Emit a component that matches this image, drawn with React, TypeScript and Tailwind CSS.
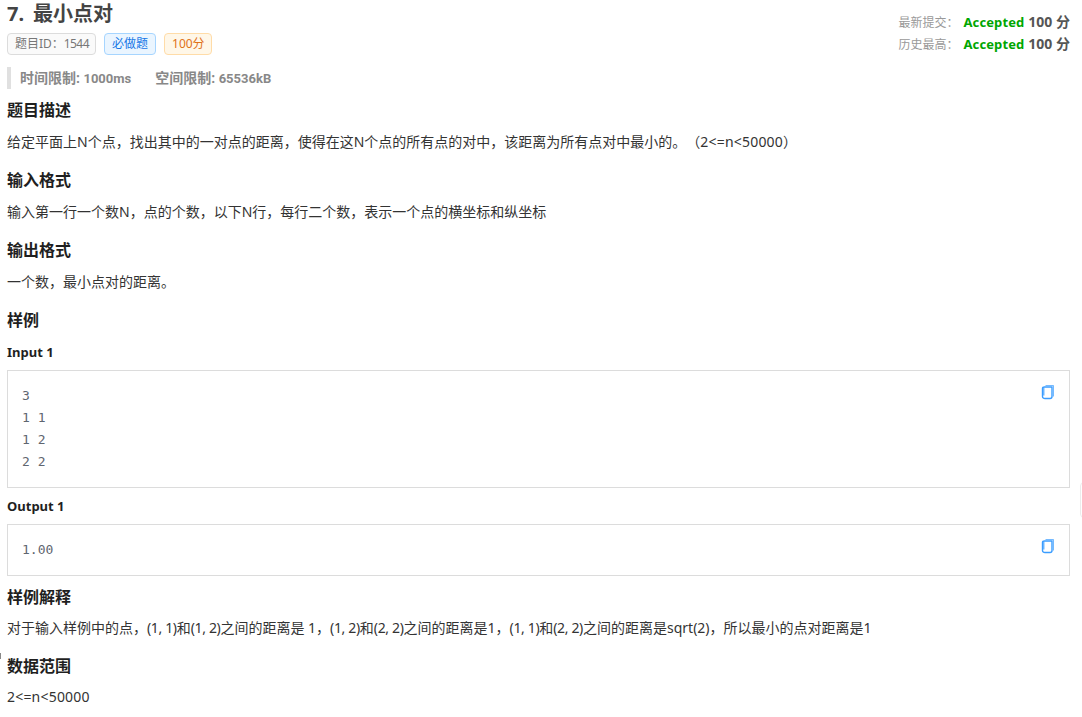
const font = { fontFamily: '"Noto Sans", "Noto Sans CJK SC", sans-serif' };
const roboto = { fontFamily: 'Roboto, "Noto Sans CJK SC", sans-serif' };

function CopyIcon() {
  return (
    <svg width="14" height="16" viewBox="0 0 14 16" fill="none" className="text-[#3b9dff]">
      <path d="M4.5 1.5H12.5V12.5" stroke="currentColor" strokeWidth="1" opacity="0.7" />
      <path d="M3.5 3H11V12.5C11 13.6 10.4 14.5 9 14.5H4C2.6 14.5 1.5 13.8 1.5 12.5V4.5C1.5 3.6 2.2 3 3.5 3Z" stroke="currentColor" strokeWidth="1.4" />
      <path d="M1.5 4.5V11.5H3.5V3.5Z" fill="currentColor" opacity="0.7" />
    </svg>
  );
}

function Heading({ children }: { children: React.ReactNode }) {
  return <h2 className="text-[16px] leading-[22px] font-bold text-[#1f1f1f]">{children}</h2>;
}

function Body({ children, gap = "mt-[11px]" }: { children: React.ReactNode; gap?: string }) {
  return (
    <p className={`text-[14px] leading-[20px] text-[#333] whitespace-nowrap [text-spacing-trim:space-all] ${gap}`}>
      {children}
    </p>
  );
}

function Pair({ children }: { children: React.ReactNode }) {
  return <span className="tracking-[-0.35px]">{children}</span>;
}

function Range() {
  return <span className="tracking-[0.2px]">2&lt;=n&lt;50000</span>;
}

function Sample({ label, lines, height }: { label: string; lines: string[]; height: string }) {
  return (
    <div>
      <div className="text-[13px] leading-[20px] font-bold text-[#1f1f1f]">{label}</div>
      <div className={`mt-[8px] relative border border-[#dcdcdc] pl-[14px] flex flex-col justify-center ${height}`}>
        <pre className="text-[13px] leading-[22px] text-[#5f6670]" style={{ fontFamily: '"DejaVu Sans Mono", monospace' }}>
          {lines.join("\n")}
        </pre>
        <div className="absolute right-[14px] top-[13px]"><CopyIcon /></div>
      </div>
    </div>
  );
}

function Status({ label }: { label: string }) {
  return (
    <div className="flex items-baseline h-[22px] leading-[22px]">
      <span className="text-[#999] text-[12px] w-[65px]">{label}</span>
      <span className="font-bold text-[13px] tracking-[0.1px] text-[#00a600]">Accepted</span>
      <span className="font-bold text-[14px] text-[#555] ml-[4px]">100 分</span>
    </div>
  );
}

function Tag({ className, children }: { className: string; children: React.ReactNode }) {
  return <span className={`h-[22px] flex items-center text-[12px] border rounded-[4px] ${className}`}>{children}</span>;
}

export default function App() {
  return (
    <div className="w-[1082px] h-[717px] overflow-hidden bg-white pl-[7px] pr-[12px] relative" style={font}>
      <div className="absolute left-[1080px] top-[482px] w-[12px] h-[36px] border border-[#ececec] rounded-l-[4px]" />
      <div className="absolute left-0 top-[653px] w-[1px] h-[6px] bg-[#888]" />
      <div className="flex justify-between">
        <div>
          <h1 className="text-[20px] leading-[28px] font-bold text-[#444] flex">
            <span className="w-[26px]">7.</span>
            <span>最小点对</span>
          </h1>
          <div className="flex gap-[8px] mt-[5px]">
            <Tag className="px-[7px] w-[89px] whitespace-nowrap border-[#dcdcdc] bg-[#fafafa] text-[#777]">
              题目ID：<span className="tracking-[-0.6px]">1544</span>
            </Tag>
            <Tag className="px-[7px] border-[#a6d5ff] bg-[#eaf5ff] text-[#1677e6]">必做题</Tag>
            <Tag className="px-[7px] w-[48px] whitespace-nowrap border-[#ffdca8] bg-[#fff7e8] text-[#e0721a]">100分</Tag>
          </div>
        </div>
        <div className="pt-[11px]">
          <Status label="最新提交：" />
          <Status label="历史最高：" />
        </div>
      </div>
      <div className="mt-[12px] h-[22px] border-l-[4px] border-[#e0e0e0] pl-[9px] flex items-center gap-[24px] text-[14px] font-bold text-[#888]" style={roboto}>
        <span>时间限制: <span className="text-[13px]">1000ms</span></span>
        <span>空间限制: <span className="text-[13px]">65536kB</span></span>
      </div>
      <div className="mt-[10px] flex flex-col">
        <Heading>题目描述</Heading>
        <Body>给定平面上N个点，找出其中的一对点的距离，使得在这N个点的所有点的对中，该距离为所有点对中最小的。（<Range />）</Body>
        <div className="mt-[17px]"><Heading>输入格式</Heading></div>
        <Body>输入第一行一个数N，点的个数，以下N行，每行二个数，表示一个点的横坐标和纵坐标</Body>
        <div className="mt-[17px]"><Heading>输出格式</Heading></div>
        <Body>一个数，最小点对的距离。</Body>
        <div className="mt-[17px]"><Heading>样例</Heading></div>
        <div className="mt-[11px]"><Sample label="Input 1" lines={["3", "1 1", "1 2", "2 2"]} height="h-[118px]" /></div>
        <div className="mt-[8px]"><Sample label="Output 1" lines={["1.00"]} height="h-[52px]" /></div>
        <div className="mt-[10px]"><Heading>样例解释</Heading></div>
        <Body gap="mt-[10px]">
          对于输入样例中的点，<Pair>(1, 1)</Pair>和<Pair>(1, 2)</Pair>之间的距离是 1，<Pair>(1, 2)</Pair>和<Pair>(2, 2)</Pair>之间的距离是1，<Pair>(1, 1)</Pair>和<Pair>(2, 2)</Pair>之间的距离是sqrt(2)，所以最小的点对距离是1
        </Body>
        <div className="mt-[17px]"><Heading>数据范围</Heading></div>
        <Body gap="mt-[10px]"><Range /></Body>
      </div>
    </div>
  );
}
